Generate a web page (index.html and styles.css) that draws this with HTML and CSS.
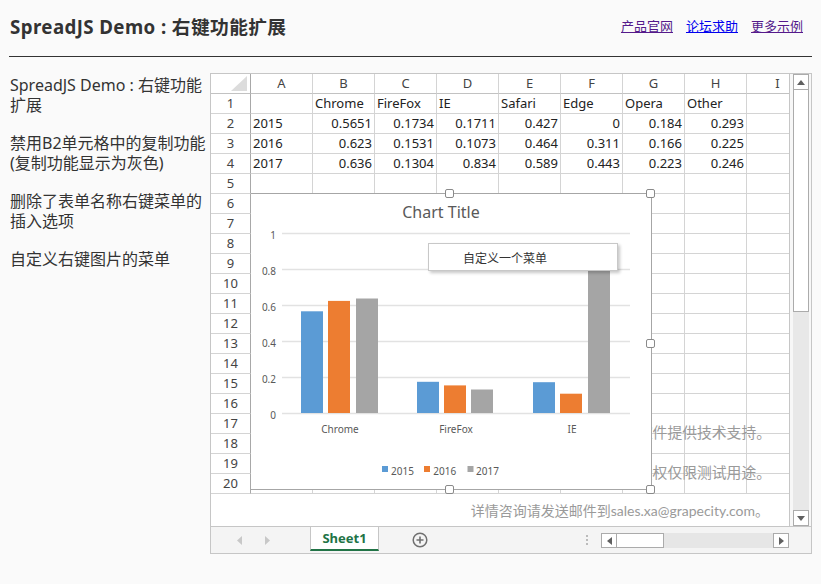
FILE: index.html
```html
<!DOCTYPE html>
<html lang="zh-CN">
<head>
<meta charset="utf-8">
<title>SpreadJS Demo : 右键功能扩展</title>
<link rel="stylesheet" href="styles.css">
</head>
<body>
<header class="top">
  <h1 class="title">SpreadJS Demo : 右键功能扩展</h1>
  <nav class="links">
    <a href="#" class="visited">产品官网</a>
    <a href="#">论坛求助</a>
    <a href="#" class="visited">更多示例</a>
  </nav>
</header>
<main class="main">
  <aside class="desc">
    <p>SpreadJS Demo : 右键功能<br>扩展</p>
    <p>禁用B2单元格中的复制功能<br>(复制功能显示为灰色)</p>
    <p>删除了表单名称右键菜单的<br>插入选项</p>
    <p>自定义右键图片的菜单</p>
  </aside>
  <section class="sheet">
    <div class="sheet-body">
      <div class="viewport">
        <table class="grid">
          <colgroup>
            <col class="w-rh"><col class="w-c"><col class="w-c"><col class="w-c"><col class="w-c"><col class="w-c"><col class="w-c"><col class="w-c"><col class="w-c"><col class="w-c">
          </colgroup>
          <thead>
            <tr><th class="corner"></th><th>A</th><th>B</th><th>C</th><th>D</th><th>E</th><th>F</th><th>G</th><th>H</th><th>I</th></tr>
          </thead>
          <tbody>
            <tr><th class="rh">1</th><td></td><td>Chrome</td><td>FireFox</td><td>IE</td><td>Safari</td><td>Edge</td><td>Opera</td><td>Other</td><td></td></tr>
            <tr><th class="rh">2</th><td>2015</td><td class="n">0.5651</td><td class="n">0.1734</td><td class="n">0.1711</td><td class="n">0.427</td><td class="n">0</td><td class="n">0.184</td><td class="n">0.293</td><td></td></tr>
            <tr><th class="rh">3</th><td>2016</td><td class="n">0.623</td><td class="n">0.1531</td><td class="n">0.1073</td><td class="n">0.464</td><td class="n">0.311</td><td class="n">0.166</td><td class="n">0.225</td><td></td></tr>
            <tr><th class="rh">4</th><td>2017</td><td class="n">0.636</td><td class="n">0.1304</td><td class="n">0.834</td><td class="n">0.589</td><td class="n">0.443</td><td class="n">0.223</td><td class="n">0.246</td><td></td></tr>
            <tr><th class="rh">5</th><td></td><td></td><td></td><td></td><td></td><td></td><td></td><td></td><td></td></tr>
            <tr><th class="rh">6</th><td></td><td></td><td></td><td></td><td></td><td></td><td></td><td></td><td></td></tr>
            <tr><th class="rh">7</th><td></td><td></td><td></td><td></td><td></td><td></td><td></td><td></td><td></td></tr>
            <tr><th class="rh">8</th><td></td><td></td><td></td><td></td><td></td><td></td><td></td><td></td><td></td></tr>
            <tr><th class="rh">9</th><td></td><td></td><td></td><td></td><td></td><td></td><td></td><td></td><td></td></tr>
            <tr><th class="rh">10</th><td></td><td></td><td></td><td></td><td></td><td></td><td></td><td></td><td></td></tr>
            <tr><th class="rh">11</th><td></td><td></td><td></td><td></td><td></td><td></td><td></td><td></td><td></td></tr>
            <tr><th class="rh">12</th><td></td><td></td><td></td><td></td><td></td><td></td><td></td><td></td><td></td></tr>
            <tr><th class="rh">13</th><td></td><td></td><td></td><td></td><td></td><td></td><td></td><td></td><td></td></tr>
            <tr><th class="rh">14</th><td></td><td></td><td></td><td></td><td></td><td></td><td></td><td></td><td></td></tr>
            <tr><th class="rh">15</th><td></td><td></td><td></td><td></td><td></td><td></td><td></td><td></td><td></td></tr>
            <tr><th class="rh">16</th><td></td><td></td><td></td><td></td><td></td><td></td><td></td><td></td><td></td></tr>
            <tr><th class="rh">17</th><td></td><td></td><td></td><td></td><td></td><td></td><td></td><td></td><td></td></tr>
            <tr><th class="rh">18</th><td></td><td></td><td></td><td></td><td></td><td></td><td></td><td></td><td></td></tr>
            <tr><th class="rh">19</th><td></td><td></td><td></td><td></td><td></td><td></td><td></td><td></td><td></td></tr>
            <tr><th class="rh">20</th><td></td><td></td><td></td><td></td><td></td><td></td><td></td><td></td><td></td></tr>
          </tbody>
        </table>
        <div class="sheet-foot">详情咨询请发送邮件到sales.xa@grapecity.com。</div>
        <div class="ov ov-1">控件提供技术支持。</div>
        <div class="ov ov-2">授权仅限测试用途。</div>
        <div class="chart">
          <svg class="chart-svg" width="400" height="295" viewBox="0 0 400 295">
            <text x="190" y="24" class="c-title" text-anchor="middle">Chart Title</text>
            <g stroke="#e2e2e2" stroke-width="1.3">
              <line x1="31" y1="39.5" x2="379" y2="39.5"/>
              <line x1="31" y1="75.5" x2="379" y2="75.5"/>
              <line x1="31" y1="111.5" x2="379" y2="111.5"/>
              <line x1="31" y1="147.5" x2="379" y2="147.5"/>
              <line x1="31" y1="183.5" x2="379" y2="183.5"/>
              <line x1="31" y1="219.5" x2="379" y2="219.5"/>
            </g>
            <g class="c-lbl" text-anchor="end">
              <text x="25" y="44.6">1</text>
              <text x="25" y="80.6">0.8</text>
              <text x="25" y="116.6">0.6</text>
              <text x="25" y="152.6">0.4</text>
              <text x="25" y="188.6">0.2</text>
              <text x="25" y="224.6">0</text>
            </g>
            <g fill="#5b9bd5">
              <rect x="50" y="117.3" width="22" height="101.7"/>
              <rect x="166" y="187.8" width="22" height="31.2"/>
              <rect x="282" y="188.2" width="22" height="30.8"/>
            </g>
            <g fill="#ed7d31">
              <rect x="77" y="106.9" width="22" height="112.1"/>
              <rect x="193" y="191.4" width="22" height="27.6"/>
              <rect x="309" y="199.7" width="22" height="19.3"/>
            </g>
            <g fill="#a5a5a5">
              <rect x="105" y="104.5" width="22" height="114.5"/>
              <rect x="220" y="195.5" width="22" height="23.5"/>
              <rect x="337" y="68.9" width="22" height="150.1"/>
            </g>
            <g class="c-lbl" text-anchor="middle">
              <text x="89" y="238.6">Chrome</text>
              <text x="205" y="238.6">FireFox</text>
              <text x="321" y="238.6">IE</text>
            </g>
            <rect x="131" y="272" width="6" height="6" fill="#5b9bd5"/>
            <text x="140" y="281" class="c-lbl">2015</text>
            <rect x="173" y="272" width="6" height="6" fill="#ed7d31"/>
            <text x="182.3" y="281" class="c-lbl">2016</text>
            <rect x="216.5" y="272" width="6" height="6" fill="#a5a5a5"/>
            <text x="225" y="281" class="c-lbl">2017</text>
          </svg>
          <span class="handle h-tm"></span>
          <span class="handle h-tr"></span>
          <span class="handle h-mr"></span>
          <span class="handle h-bm"></span>
          <span class="handle h-br"></span>
        </div>
        <div class="ctxmenu">自定义一个菜单</div>
      </div>
      <div class="vscroll">
        <div class="sb-btn"><svg width="8" height="5" viewBox="0 0 8 5"><path d="M0 5 L4 0 L8 5 Z" fill="#606060"/></svg></div>
        <div class="vthumb"></div>
        <div class="vtrack"></div>
        <div class="sb-btn"><svg width="8" height="5" viewBox="0 0 8 5"><path d="M0 0 L4 5 L8 0 Z" fill="#606060"/></svg></div>
      </div>
    </div>
    <div class="tabbar">
      <div class="tabnav">
        <svg width="6" height="9" viewBox="0 0 6 9"><path d="M6 0 L1 4.5 L6 9 Z" fill="#c8c8c8"/></svg>
        <svg width="6" height="9" viewBox="0 0 6 9"><path d="M0 0 L5 4.5 L0 9 Z" fill="#c8c8c8"/></svg>
      </div>
      <div class="tab">Sheet1</div>
      <div class="addtab">
        <svg width="16" height="16" viewBox="0 0 16 16"><circle cx="8" cy="8" r="6.8" fill="none" stroke="#707070" stroke-width="1.5"/><path d="M8 4.5 V11.5 M4.5 8 H11.5" stroke="#707070" stroke-width="1.6"/></svg>
      </div>
      <div class="spacer"></div>
      <div class="dots">
        <svg width="4" height="12" viewBox="0 0 4 12"><circle cx="2" cy="2" r="1" fill="#a8a8a8"/><circle cx="2" cy="6" r="1" fill="#a8a8a8"/><circle cx="2" cy="10" r="1" fill="#a8a8a8"/></svg>
      </div>
      <div class="hscroll">
        <div class="hb-btn"><svg width="5" height="8" viewBox="0 0 5 8"><path d="M5 0 L0 4 L5 8 Z" fill="#606060"/></svg></div>
        <div class="hthumb"></div>
        <div class="htrack"></div>
        <div class="hb-btn"><svg width="5" height="8" viewBox="0 0 5 8"><path d="M0 0 L5 4 L0 8 Z" fill="#606060"/></svg></div>
      </div>
    </div>
  </section>
</main>
</body>
</html>
```

FILE: styles.css
```css
* { box-sizing: border-box; }

body {
  margin: 0;
  background: #fafafa;
  font-family: "Noto Sans", "Noto Sans CJK SC", sans-serif;
  color: #333;
}

.top {
  display: flex;
  justify-content: space-between;
  align-items: center;
  height: 57px;
  margin: 0 9px;
  padding: 0 9px 6px 1px;
  border-bottom: 1px solid #333;
}

.title {
  margin: 0;
  font-size: 18.72px;
  font-weight: bold;
  letter-spacing: 0.4px;
  color: #333;
}

.links {
  display: flex;
  gap: 13px;
  font-size: 13px;
}

.links a { color: #0000ee; text-decoration: underline; }
.links a.visited { color: #551a8b; }

.main {
  display: flex;
  padding: 16px 0 0 10px;
}

.desc {
  width: 200px;
  padding-top: 2px;
  font-size: 16px;
  line-height: 20px;
  color: #333;
}

.desc p { margin: 0 0 18px; }

.sheet {
  width: 602px;
  height: 481px;
  border: 1px solid #c6c6c6;
  background: #fff;
  display: flex;
  flex-direction: column;
}

.sheet-body {
  display: flex;
  height: 452px;
}

.viewport {
  position: relative;
  width: 578px;
  overflow: hidden;
}

.grid {
  border-collapse: separate;
  border-spacing: 0;
  table-layout: fixed;
  width: 598px;
  font-size: 13px;
  color: #222;
}

.w-rh { width: 40px; }
.w-c { width: 62px; }

.grid tr { height: 20px; }

.grid th,
.grid td {
  height: 20px;
  padding: 0 2px;
  border-right: 1px solid #d4d4d4;
  border-bottom: 1px solid #d4d4d4;
  white-space: nowrap;
  overflow: hidden;
  line-height: 19px;
  font-weight: normal;
  text-align: left;
}

.grid thead th {
  text-align: center;
  color: #444;
  border-bottom-color: #c2c2c2;
}

.grid th.rh {
  text-align: center;
  color: #444;
  border-right-color: #a8a8a8;
}

.grid th.corner {
  position: relative;
  border-right-color: #a8a8a8;
}

.grid th.corner::after {
  content: "";
  position: absolute;
  right: 3px;
  bottom: 2px;
  border-left: 16px solid transparent;
  border-bottom: 15px solid #dcdcdc;
}

.grid td.n { text-align: right; }

.sheet-foot {
  height: 32px;
  display: flex;
  align-items: center;
  justify-content: flex-end;
  padding-right: 20px;
  font-family: "Lato", "Noto Sans CJK SC", sans-serif;
  font-size: 14px;
  color: #9a9a9a;
  white-space: nowrap;
}

.ov {
  position: absolute;
  right: 18px;
  font-family: "Lato", "Noto Sans CJK SC", sans-serif;
  font-size: 14.8px;
  line-height: 20px;
  color: #9a9a9a;
  white-space: nowrap;
}

.ov-1 { top: 348px; }
.ov-2 { top: 388px; }

.chart {
  position: absolute;
  left: 40px;
  top: 119px;
  width: 401px;
  height: 297px;
  background: #fff;
  border-top: 1px solid #a6a6a6;
  border-right: 1px solid #a6a6a6;
  border-bottom: 1px solid #a6a6a6;
}

.chart-svg {
  display: block;
  font-family: "Noto Sans", sans-serif;
}

.c-title { font-size: 16px; fill: #595959; }
.c-lbl { font-size: 10px; fill: #595959; }

.handle {
  position: absolute;
  width: 9px;
  height: 9px;
  background: #fff;
  border: 1px solid #8a8a8a;
  border-radius: 2px;
}

.h-tm { left: 194px; top: -5px; }
.h-tr { left: 395px; top: -5px; }
.h-mr { left: 395px; top: 145px; }
.h-bm { left: 194px; top: 291px; }
.h-br { left: 395px; top: 291px; }

.ctxmenu {
  position: absolute;
  left: 217px;
  top: 169px;
  width: 190px;
  height: 28px;
  padding-left: 34px;
  display: flex;
  align-items: center;
  background: #fff;
  border: 1px solid #c8c8c8;
  box-shadow: 2px 2px 3px rgba(0, 0, 0, 0.22);
  font-family: "Noto Sans CJK SC", sans-serif;
  font-size: 12px;
  color: #333;
}

.vscroll {
  width: 22px;
  border-left: 1px solid #c6c6c6;
  background: #f7f7f7;
  padding: 0 2px 0 3px;
  display: flex;
  flex-direction: column;
}

.sb-btn {
  height: 16px;
  background: #fff;
  border: 1px solid #ababab;
  display: flex;
  align-items: center;
  justify-content: center;
}

.vthumb {
  height: 222px;
  background: #fff;
  border: 1px solid #ababab;
  border-top: 0;
}

.vtrack {
  flex: 1;
  background: #e8e8e8;
}

.tabbar {
  height: 27px;
  border-top: 1px solid #c6c6c6;
  background: #f4f4f4;
  display: flex;
  align-items: flex-start;
}

.tabnav {
  width: 99px;
  height: 26px;
  display: flex;
  align-items: center;
  gap: 23px;
  padding-left: 25px;
}

.tab {
  width: 69px;
  height: 24px;
  background: #fff;
  border-left: 1px solid #c6c6c6;
  border-right: 1px solid #c6c6c6;
  border-bottom: 2px solid #217346;
  display: flex;
  align-items: center;
  justify-content: center;
  font-size: 13px;
  font-weight: bold;
  color: #217346;
}

.addtab {
  height: 26px;
  margin-left: 33px;
  display: flex;
  align-items: center;
}

.spacer { flex: 1; }

.dots {
  height: 26px;
  display: flex;
  align-items: center;
  margin-right: 12px;
}

.hscroll {
  width: 188px;
  height: 15px;
  margin-top: 6px;
  margin-right: 22px;
  display: flex;
}

.hb-btn {
  width: 16px;
  background: #fff;
  border: 1px solid #ababab;
  display: flex;
  align-items: center;
  justify-content: center;
}

.hthumb {
  width: 47px;
  background: #fff;
  border: 1px solid #ababab;
  border-left: 0;
}

.htrack {
  flex: 1;
  background: #e6e6e6;
}
```
